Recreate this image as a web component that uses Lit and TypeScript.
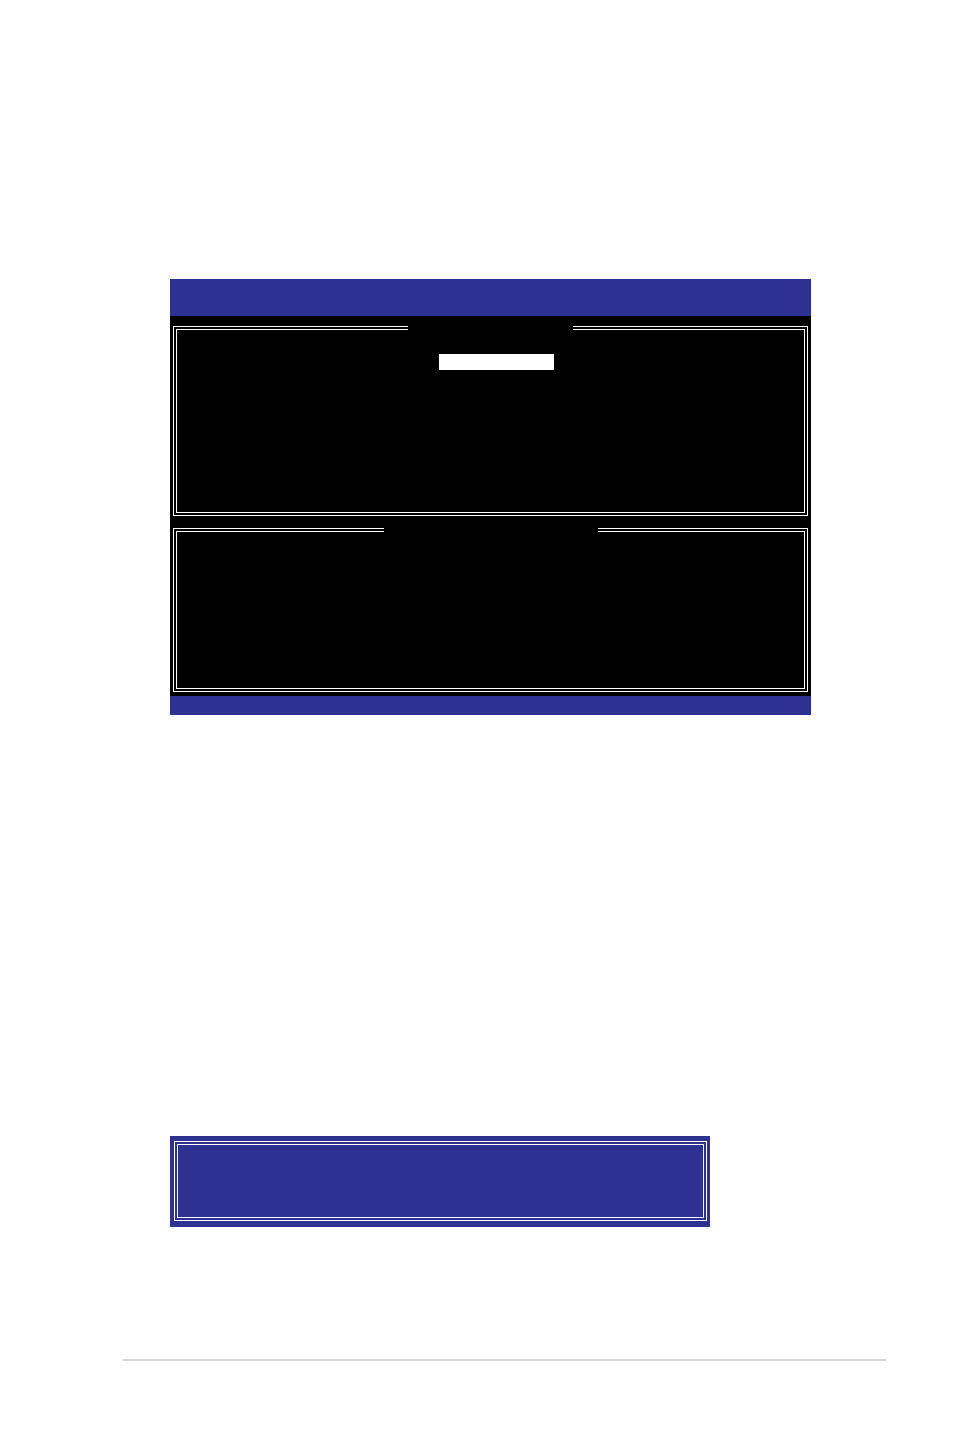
import { LitElement, html, css } from "lit";
import { customElement } from "lit/decorators.js";

@customElement("app-root")
export class AppRoot extends LitElement {
  static styles = css`
    :host {
      display: block;
      min-height: 100vh;
      box-sizing: border-box;
      padding: 279px 68px 76px 123px;
      background: #ffffff;
      font-family: "Liberation Mono", monospace;
    }
    .content {
      padding: 0 75px 0 47px;
    }
    .screen {
      background: #000000;
    }
    .title-bar {
      min-height: 37px;
      background: #2e3192;
    }
    .status-bar {
      min-height: 19px;
      background: #2e3192;
    }
    .panels {
      display: flex;
      flex-direction: column;
      gap: 12px;
      padding: 10px 3px 4px;
    }
    .frame {
      box-sizing: border-box;
      min-width: 0;
      margin: 0;
      padding: 0;
      border: 4px double #ffffff;
    }
    .caption {
      height: 4px;
      margin: 0 auto;
      padding: 0;
    }
    .menu {
      min-height: 190px;
    }
    .menu .caption {
      width: 165px;
    }
    .help {
      min-height: 164px;
    }
    .help .caption {
      width: 214px;
    }
    .selected {
      width: 115px;
      height: 16px;
      margin: 24px auto 0;
      padding-left: 12px;
      background: #ffffff;
      background-clip: content-box;
    }
    .prompt {
      display: grid;
      max-width: 540px;
      min-height: 91px;
      box-sizing: border-box;
      margin-top: 421px;
      padding: 5px 3px 6px 4px;
      background: #2e3192;
    }
    .footer-rule {
      height: 2px;
      margin: 132px 0 0;
      border: 0;
      background: #d6d6d6;
    }
  `;

  render() {
    return html`
      <main class="content">
        <section class="screen">
          <header class="title-bar"></header>
          <div class="panels">
            <fieldset class="frame menu">
              <legend class="caption"></legend>
              <div class="selected"></div>
            </fieldset>
            <fieldset class="frame help">
              <legend class="caption"></legend>
            </fieldset>
          </div>
          <footer class="status-bar"></footer>
        </section>
        <section class="prompt">
          <div class="frame"></div>
        </section>
      </main>
      <hr class="footer-rule" />
    `;
  }
}
